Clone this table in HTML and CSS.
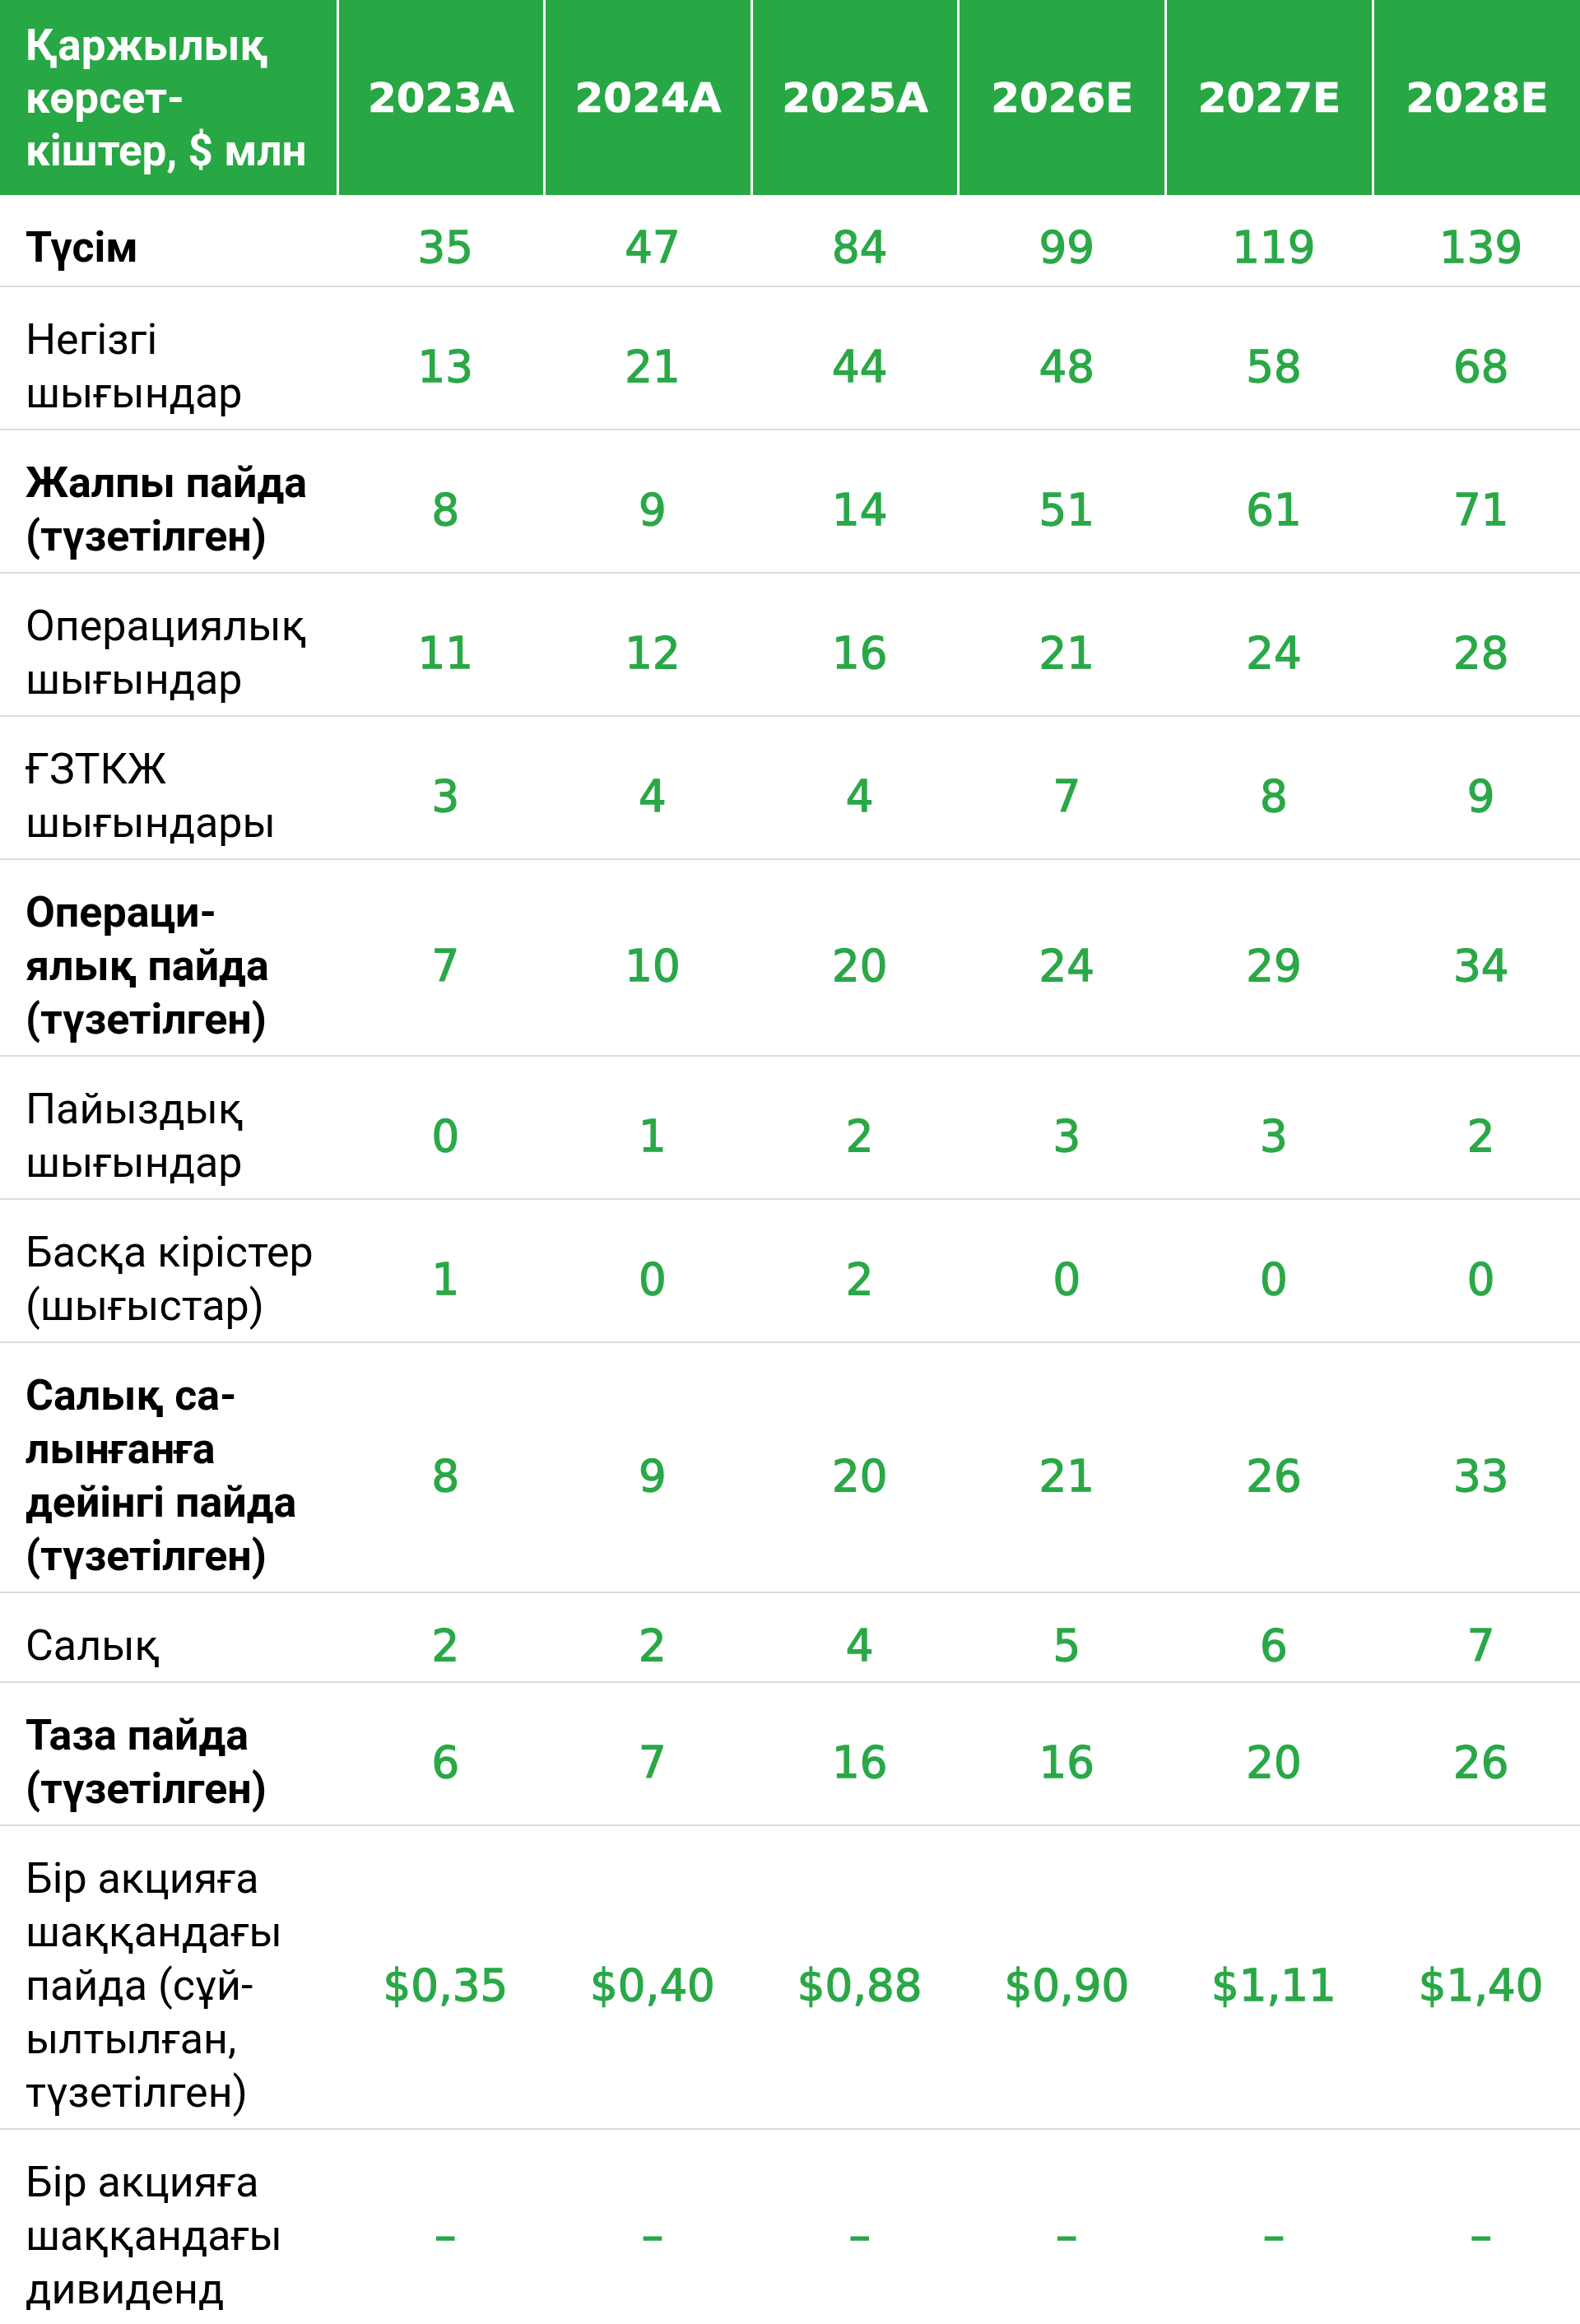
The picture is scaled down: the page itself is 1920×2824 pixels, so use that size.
FILE: index.html
```html
<!DOCTYPE html>
<html lang="kk">
<head>
<meta charset="utf-8">
<title>Қаржылық көрсеткіштер</title>
<link rel="stylesheet" href="styles.css">
</head>
<body>
<table class="fin">
  <colgroup>
    <col class="c-label">
    <col class="c-year"><col class="c-year"><col class="c-year">
    <col class="c-year"><col class="c-year"><col class="c-year">
  </colgroup>
  <thead>
    <tr>
      <th class="h-label">Қаржылық<br>көрсет-<br>кіштер, $ млн</th>
      <th class="h-year">2023A</th>
      <th class="h-year">2024A</th>
      <th class="h-year">2025A</th>
      <th class="h-year">2026E</th>
      <th class="h-year">2027E</th>
      <th class="h-year">2028E</th>
    </tr>
  </thead>
  <tbody>
    <tr class="strong first">
      <td class="lbl">Түсім</td>
      <td class="num">35</td><td class="num">47</td><td class="num">84</td><td class="num">99</td><td class="num">119</td><td class="num">139</td>
    </tr>
    <tr>
      <td class="lbl">Негізгі<br>шығындар</td>
      <td class="num">13</td><td class="num">21</td><td class="num">44</td><td class="num">48</td><td class="num">58</td><td class="num">68</td>
    </tr>
    <tr class="strong">
      <td class="lbl">Жалпы пайда<br>(түзетілген)</td>
      <td class="num">8</td><td class="num">9</td><td class="num">14</td><td class="num">51</td><td class="num">61</td><td class="num">71</td>
    </tr>
    <tr>
      <td class="lbl">Операциялық<br>шығындар</td>
      <td class="num">11</td><td class="num">12</td><td class="num">16</td><td class="num">21</td><td class="num">24</td><td class="num">28</td>
    </tr>
    <tr>
      <td class="lbl">ҒЗТКЖ<br>шығындары</td>
      <td class="num">3</td><td class="num">4</td><td class="num">4</td><td class="num">7</td><td class="num">8</td><td class="num">9</td>
    </tr>
    <tr class="strong">
      <td class="lbl">Операци-<br>ялық пайда<br>(түзетілген)</td>
      <td class="num">7</td><td class="num">10</td><td class="num">20</td><td class="num">24</td><td class="num">29</td><td class="num">34</td>
    </tr>
    <tr>
      <td class="lbl">Пайыздық<br>шығындар</td>
      <td class="num">0</td><td class="num">1</td><td class="num">2</td><td class="num">3</td><td class="num">3</td><td class="num">2</td>
    </tr>
    <tr>
      <td class="lbl">Басқа кірістер<br>(шығыстар)</td>
      <td class="num">1</td><td class="num">0</td><td class="num">2</td><td class="num">0</td><td class="num">0</td><td class="num">0</td>
    </tr>
    <tr class="strong">
      <td class="lbl">Салық са-<br>лынғанға<br>дейінгі пайда<br>(түзетілген)</td>
      <td class="num">8</td><td class="num">9</td><td class="num">20</td><td class="num">21</td><td class="num">26</td><td class="num">33</td>
    </tr>
    <tr>
      <td class="lbl">Салық</td>
      <td class="num">2</td><td class="num">2</td><td class="num">4</td><td class="num">5</td><td class="num">6</td><td class="num">7</td>
    </tr>
    <tr class="strong">
      <td class="lbl">Таза пайда<br>(түзетілген)</td>
      <td class="num">6</td><td class="num">7</td><td class="num">16</td><td class="num">16</td><td class="num">20</td><td class="num">26</td>
    </tr>
    <tr>
      <td class="lbl">Бір акцияға<br>шаққандағы<br>пайда (сұй-<br>ылтылған,<br>түзетілген)</td>
      <td class="num">$0,35</td><td class="num">$0,40</td><td class="num">$0,88</td><td class="num">$0,90</td><td class="num">$1,11</td><td class="num">$1,40</td>
    </tr>
    <tr class="last">
      <td class="lbl">Бір акцияға<br>шаққандағы<br>дивиденд</td>
      <td class="num">–</td><td class="num">–</td><td class="num">–</td><td class="num">–</td><td class="num">–</td><td class="num">–</td>
    </tr>
  </tbody>
</table>
</body>
</html>
```

FILE: styles.css
```css
html, body {
  margin: 0;
  padding: 0;
  background: #ffffff;
}

.fin {
  width: 1920px;
  border-collapse: collapse;
  table-layout: fixed;
}

.c-label { width: 410px; }
.c-year { width: 251.66px; }

.fin thead th {
  background: #28a745;
  color: #ffffff;
  height: 237px;
  padding: 0;
  vertical-align: middle;
  font-weight: 700;
}

.fin thead th + th {
  border-left: 3px solid #ffffff;
}

.h-label {
  text-align: left;
  padding-left: 31px !important;
  font-family: Roboto, "Noto Sans", sans-serif;
  font-size: 53px;
  line-height: 64px;
  white-space: nowrap;
}

.h-year {
  text-align: center;
  font-family: "DejaVu Sans", sans-serif;
  font-size: 50px;
  line-height: 60px;
  -webkit-text-stroke: 0.6px #ffffff;
}

.fin tbody td {
  padding: 31px 0 11px;
  border-bottom: 2px solid #dcdcdc;
  line-height: 65px;
  vertical-align: middle;
}

.fin tbody tr.first td {
  padding-bottom: 14px;
}

.fin tbody tr.last td {
  border-bottom: none;
}

.lbl {
  padding-left: 31px !important;
  text-align: left;
  white-space: nowrap;
  color: #000000;
  font-family: Roboto, "Noto Sans", sans-serif;
  font-size: 52px;
  font-weight: 400;
}

.strong .lbl {
  font-weight: 700;
}

.num {
  text-align: center;
  color: #2aa847;
  font-family: "DejaVu Sans", sans-serif;
  font-size: 53px;
  font-weight: 400;
  -webkit-text-stroke: 1.3px #2aa847;
  white-space: nowrap;
  padding-left: 11px !important;
}
```
